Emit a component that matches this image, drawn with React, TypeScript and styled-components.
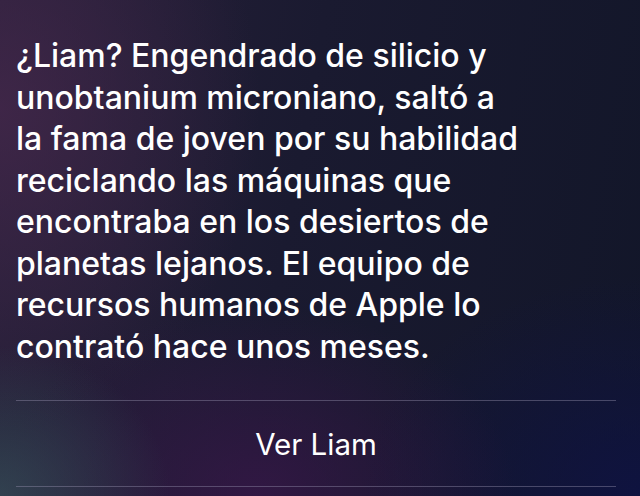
import styled, { createGlobalStyle } from "styled-components";

const GlobalStyle = createGlobalStyle`
  html, body {
    margin: 0;
    padding: 0;
    background: #151a2c;
  }
  * {
    box-sizing: border-box;
  }
`;

const Screen = styled.main`
  width: 640px;
  height: 496px;
  overflow: hidden;
  display: flex;
  flex-direction: column;
  padding: 35px 24px 0 16px;
  font-family: Inter, "Noto Sans", sans-serif;
  color: #ffffff;
  background:
    radial-gradient(ellipse 170px 150px at 0% 100%, rgba(55, 80, 90, 0.7), transparent 100%),
    radial-gradient(ellipse 260px 190px at 40% 100%, rgba(62, 22, 78, 0.65), transparent 100%),
    radial-gradient(ellipse 260px 320px at 0% 22%, rgba(70, 40, 76, 0.75), transparent 100%),
    radial-gradient(ellipse 280px 220px at 100% 100%, rgba(14, 18, 70, 0.8), transparent 100%),
    linear-gradient(100deg, #28203a 0%, #1a1a30 45%, #121629 100%);
`;

const Answer = styled.p`
  margin: 0;
  font-size: 32px;
  line-height: 41.5px;
  font-weight: 500;
  letter-spacing: 0;
  white-space: nowrap;
`;

const Divider = styled.hr`
  margin: 0;
  border: 0;
  height: 1px;
  width: 600px;
  flex-shrink: 0;
  background: rgba(150, 145, 175, 0.42);
`;

const ActionRow = styled.button`
  display: flex;
  align-items: center;
  justify-content: center;
  width: 600px;
  height: 85px;
  flex-shrink: 0;
  padding: 0;
  border: 0;
  background: transparent;
  color: #ffffff;
  font-family: Inter, "Noto Sans", sans-serif;
  font-size: 29.5px;
  font-weight: 400;
  cursor: pointer;
`;

const Spacer = styled.div<{ $h: number }>`
  height: ${(p) => p.$h}px;
  flex-shrink: 0;
`;

export default function App() {
  return (
    <>
      <GlobalStyle />
      <Screen>
        <Answer>
          ¿Liam? Engendrado de silicio y<br />
          unobtanium microniano, saltó a<br />
          la fama de joven por su habilidad<br />
          reciclando las máquinas que<br />
          encontraba en los desiertos de<br />
          planetas lejanos. El equipo de<br />
          recursos humanos de Apple lo<br />
          contrató hace unos meses.
        </Answer>
        <Spacer $h={33} />
        <Divider />
        <ActionRow type="button">Ver Liam</ActionRow>
        <Divider />
      </Screen>
    </>
  );
}
